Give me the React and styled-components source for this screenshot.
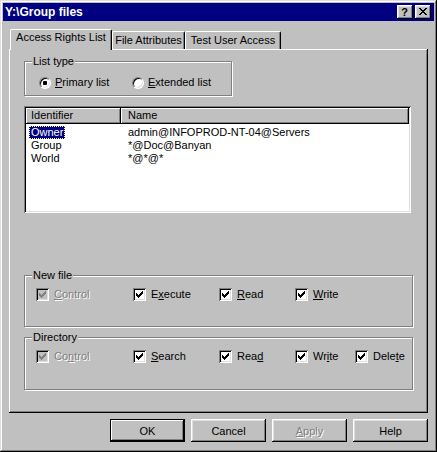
import React from 'react';
import styled, { createGlobalStyle, css } from 'styled-components';

const GlobalStyle = createGlobalStyle`
  html, body {
    margin: 0;
    padding: 0;
    background: #c0c0c0;
  }
  body {
    font-family: 'Liberation Sans', Arial, sans-serif;
    font-size: 11px;
    color: #000;
  }
`;

const raised = css`
  box-shadow: inset -1px -1px #000, inset 1px 1px #fff, inset -2px -2px #808080, inset 2px 2px #dfdfdf;
`;

const sunken = css`
  box-shadow: inset 1px 1px #808080, inset -1px -1px #fff, inset 2px 2px #000, inset -2px -2px #dfdfdf;
`;

const Window = styled.div`
  width: 437px;
  height: 452px;
  box-sizing: border-box;
  padding: 3px;
  background: #c0c0c0;
  box-shadow: inset -1px -1px #000, inset 1px 1px #dfdfdf, inset -2px -2px #808080, inset 2px 2px #fff;
  display: flex;
  flex-direction: column;
`;

const TitleBar = styled.div`
  height: 18px;
  background: #000080;
  color: #fff;
  font-size: 12px;
  font-weight: bold;
  display: flex;
  align-items: center;
  padding: 0 3px 0 2px;
`;

const TitleButtons = styled.div`
  margin-left: auto;
  display: flex;
  gap: 2px;
`;

const TitleButton = styled.span`
  width: 16px;
  height: 14px;
  box-sizing: border-box;
  background: #c0c0c0;
  color: #000;
  ${raised};
  display: flex;
  align-items: center;
  justify-content: center;
  font-size: 11px;
  font-weight: bold;
  line-height: 14px;
  padding: 0 1px 1px 0;
`;

const TabStrip = styled.div`
  display: flex;
  align-items: flex-end;
  margin: 8px 0 0 7px;
  height: 20px;
`;

const Tab = styled.div`
  box-sizing: border-box;
  width: ${(p) => p.$w}px;
  height: ${(p) => (p.$active ? 21 : 18)}px;
  margin-bottom: ${(p) => (p.$active ? -1 : 0)}px;
  padding-top: ${(p) => (p.$active ? 1 : 2)}px;
  line-height: 13px;
  text-align: center;
  background: #c0c0c0;
  border: 1px solid;
  border-color: #fff #000 transparent #fff;
  border-bottom: none;
  border-radius: 2px 2px 0 0;
  box-shadow: inset -1px 0 #808080;
  position: relative;
  z-index: ${(p) => (p.$active ? 1 : 0)};
`;

const Panel = styled.div`
  width: 419px;
  height: 364px;
  box-sizing: border-box;
  margin-left: 6px;
  padding: 12px 0 0 15px;
  box-shadow: inset -1px -1px #000, inset 1px 1px #fff, inset -2px -2px #808080;
  display: flex;
  flex-direction: column;
  align-items: flex-start;
`;

const GroupBox = styled.div`
  box-sizing: border-box;
  width: ${(p) => p.$w}px;
  height: ${(p) => p.$h}px;
  margin-top: ${(p) => p.$top || 0}px;
  border: 1px solid #808080;
  box-shadow: inset 1px 1px #fff, 1px 1px #fff;
  display: flex;
  flex-direction: column;
  align-items: flex-start;
`;

const GroupLabel = styled.div`
  margin: -7px 0 0 7px;
  padding: 0 1px;
  line-height: 13px;
  background: #c0c0c0;
`;

const OptionRow = styled.div`
  display: flex;
  margin-top: ${(p) => p.$top}px;
  padding-left: ${(p) => p.$left}px;
  line-height: 13px;
  height: 13px;
`;

const Option = styled.label`
  display: flex;
  align-items: center;
  gap: ${(p) => p.$gap}px;
  width: ${(p) => (p.$w ? `${p.$w}px` : 'auto')};
  color: ${(p) => (p.$disabled ? '#808080' : '#000')};
  text-shadow: ${(p) => (p.$disabled ? '1px 1px #fff' : 'none')};
`;

const RadioCircle = styled.span`
  width: 12px;
  height: 12px;
  box-sizing: border-box;
  border-radius: 50%;
  background: #fff;
  border: 1px solid;
  border-color: #808080 #fff #fff #808080;
  box-shadow: inset 1px 1px #000, inset -1px -1px #dfdfdf;
  display: flex;
  align-items: center;
  justify-content: center;
  flex: none;
`;

const RadioDot = styled.span`
  width: 4px;
  height: 4px;
  border-radius: 1px;
  background: #000;
`;

const CheckBox = styled.span`
  width: 13px;
  height: 13px;
  box-sizing: border-box;
  flex: none;
  background: ${(p) => (p.$disabled ? '#c0c0c0' : '#fff')};
  ${sunken};
  display: flex;
  align-items: center;
  justify-content: center;
`;

const ListView = styled.div`
  box-sizing: border-box;
  width: 387px;
  height: 107px;
  margin-top: 10px;
  padding: 2px;
  background: #fff;
  ${sunken};
`;

const HeaderRow = styled.div`
  display: grid;
  grid-template-columns: 95px 1fr;
  height: 16px;
  margin-bottom: 2px;
`;

const HeaderCell = styled.div`
  background: #c0c0c0;
  box-shadow: inset -1px -1px #000, inset 1px 1px #fff, inset -2px -2px #808080;
  line-height: 15px;
  padding-left: ${(p) => p.$pad}px;
`;

const ListRow = styled.div`
  display: grid;
  grid-template-columns: 95px 1fr;
  height: 13px;
  line-height: 13px;
`;

const IdCell = styled.div`
  padding-left: 3px;
`;

const IdText = styled.span`
  display: inline-block;
  padding: 0 2px;
  background: ${(p) => (p.$selected ? '#000080' : 'transparent')};
  color: ${(p) => (p.$selected ? '#fff' : '#000')};
  outline: ${(p) => (p.$selected ? '1px dotted #ffff7f' : 'none')};
  outline-offset: -1px;
`;

const NameCell = styled.div`
  padding-left: 7px;
`;

const ButtonRow = styled.div`
  width: 419px;
  margin: 6px 0 0 6px;
  display: flex;
  justify-content: flex-end;
  gap: 6px;
`;

const Button = styled.button`
  width: 75px;
  height: 23px;
  padding: 0;
  border: none;
  background: #c0c0c0;
  font-family: 'Liberation Sans', Arial, sans-serif;
  font-size: 11px;
  color: ${(p) => (p.disabled ? '#808080' : '#000')};
  text-shadow: ${(p) => (p.disabled ? '1px 1px #fff' : 'none')};
  ${(p) =>
    p.$default
      ? css`
          box-shadow: inset 0 0 0 1px #000, inset -2px -2px #000, inset 2px 2px #fff, inset -3px -3px #808080;
        `
      : raised};
`;

const CheckMark = ({ color = '#000' }) => (
  <svg width="7" height="7" viewBox="0 0 7 7" shapeRendering="crispEdges">
    <path
      fill={color}
      d="M6 0h1v1h-1z M5 1h2v1h-2z M0 2h1v1h-1z M4 2h3v1h-3z M0 3h2v1h-2z M3 3h3v1h-3z M0 4h5v1h-5z M1 5h3v1h-3z M2 6h1v1h-1z"
    />
  </svg>
);

const CloseGlyph = () => (
  <svg width="8" height="7" viewBox="0 0 8 7" shapeRendering="crispEdges">
    <path
      fill="#000"
      d="M0 0h2v1h-2z M6 0h2v1h-2z M1 1h2v1h-2z M5 1h2v1h-2z M2 2h4v1h-4z M3 3h2v1h-2z M2 4h4v1h-4z M1 5h2v1h-2z M5 5h2v1h-2z M0 6h2v1h-2z M6 6h2v1h-2z"
    />
  </svg>
);

const Radio = ({ checked, w, children }) => (
  <Option $w={w} $gap={4}>
    <RadioCircle>{checked && <RadioDot />}</RadioCircle>
    <span>{children}</span>
  </Option>
);

const Check = ({ w, disabled, children }) => (
  <Option $w={w} $gap={5} $disabled={disabled}>
    <CheckBox $disabled={disabled}>
      <CheckMark color={disabled ? '#808080' : '#000'} />
    </CheckBox>
    <span>{children}</span>
  </Option>
);

const entries = [
  { id: 'Owner', name: 'admin@INFOPROD-NT-04@Servers', selected: true },
  { id: 'Group', name: '*@Doc@Banyan' },
  { id: 'World', name: '*@*@*' },
];

const App = () => (
  <>
    <GlobalStyle />
    <Window>
      <TitleBar>
        <span>Y:\Group files</span>
        <TitleButtons>
          <TitleButton>?</TitleButton>
          <TitleButton>
            <CloseGlyph />
          </TitleButton>
        </TitleButtons>
      </TitleBar>

      <TabStrip>
        <Tab $active $w={102}>Access Rights List</Tab>
        <Tab $w={73}>File Attributes</Tab>
        <Tab $w={96}>Test User Access</Tab>
      </TabStrip>

      <Panel>
        <GroupBox $w={208} $h={35}>
          <GroupLabel>List type</GroupLabel>
          <OptionRow $top={8} $left={14}>
            <Radio checked w={93}>
              <u>P</u>rimary list
            </Radio>
            <Radio>
              <u>E</u>xtended list
            </Radio>
          </OptionRow>
        </GroupBox>

        <ListView>
          <HeaderRow>
            <HeaderCell $pad={5}>Identifier</HeaderCell>
            <HeaderCell $pad={7}>Name</HeaderCell>
          </HeaderRow>
          {entries.map((e) => (
            <ListRow key={e.id}>
              <IdCell>
                <IdText $selected={e.selected}>{e.id}</IdText>
              </IdCell>
              <NameCell>{e.name}</NameCell>
            </ListRow>
          ))}
        </ListView>

        <GroupBox $w={389} $h={52} $top={62}>
          <GroupLabel>New file</GroupLabel>
          <OptionRow $top={6} $left={11}>
            <Check w={97} disabled>
              <u>C</u>ontrol
            </Check>
            <Check w={86}>
              E<u>x</u>ecute
            </Check>
            <Check w={76}>
              <u>R</u>ead
            </Check>
            <Check w={60}>
              <u>W</u>rite
            </Check>
          </OptionRow>
        </GroupBox>

        <GroupBox $w={389} $h={53} $top={10}>
          <GroupLabel>Directory</GroupLabel>
          <OptionRow $top={6} $left={11}>
            <Check w={97} disabled>
              Co<u>n</u>trol
            </Check>
            <Check w={86}>
              <u>S</u>earch
            </Check>
            <Check w={76}>
              Rea<u>d</u>
            </Check>
            <Check w={60}>
              Wr<u>i</u>te
            </Check>
            <Check>
              Dele<u>t</u>e
            </Check>
          </OptionRow>
        </GroupBox>
      </Panel>

      <ButtonRow>
        <Button $default>OK</Button>
        <Button>Cancel</Button>
        <Button disabled>
          <u>A</u>pply
        </Button>
        <Button>Help</Button>
      </ButtonRow>
    </Window>
  </>
);

export default App;
